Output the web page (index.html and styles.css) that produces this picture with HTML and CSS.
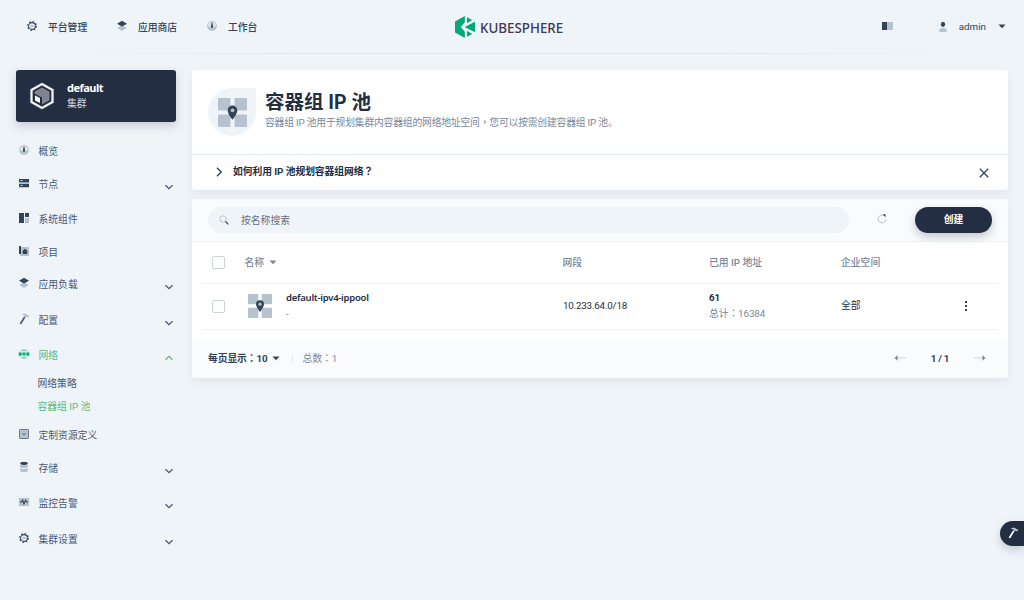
FILE: index.html
```html
<!DOCTYPE html>
<html lang="zh-CN">
<head>
    <meta charset="UTF-8">
    <meta name="viewport" content="width=device-width, initial-scale=1.0">
    <title>容器组 IP 池 - KubeSphere</title>
    <link rel="stylesheet" href="styles.css">
</head>
<body>
    <!-- shared icons -->
    <svg class="sprite" width="0" height="0">
        <symbol id="gear" viewBox="0 0 12 12">
            <circle cx="6" cy="6" r="4.4" fill="none" stroke="#324558" stroke-width="1.2" stroke-dasharray="1.5 1.956"/>
            <circle cx="6" cy="6" r="3.4" fill="none" stroke="#324558" stroke-width="1.1"/>
            <circle cx="6" cy="6" r="1.6" fill="#b6c2cd"/>
        </symbol>
        <symbol id="layers" viewBox="0 0 12 12">
            <path d="M6 5.2 10.8 8 6 11 1.2 8z" fill="#b6c2cd"/>
            <path d="M6 .8 11 3.8 6 6.6 1 3.8z" fill="#324558"/>
        </symbol>
        <symbol id="dashboard" viewBox="0 0 12 12">
            <circle cx="6" cy="6" r="4.9" fill="#b6c2cd"/>
            <path d="M2 6a4 4 0 0 1 8 0L8 7H4z" fill="#dfe6ec"/>
            <path d="M5.6 2.5h.8l.6 3.7a1.1 1.1 0 1 1-2 0z" fill="#324558"/>
        </symbol>
        <symbol id="pool" viewBox="0 0 24 24">
            <path d="M1 0h9.3v9L9 10.3H1a1 1 0 0 1-1-1V1a1 1 0 0 1 1-1zm12.7 0H23a1 1 0 0 1 1 1v8.3a1 1 0 0 1-1 1h-8L13.7 9zM1 13.7h8l1.3 1.3v9H1a1 1 0 0 1-1-1v-8.300a1 1 0 0 1 1-1zm14 0h8a1 1 0 0 1 1 1V23a1 1 0 0 1-1 1h-9.300v-9z" fill="#b6c2cd"/>
            <path d="M12 6.300a4 4 0 0 0-4 4c0 2.700 4 7.700 4 7.700s4-5 4-7.700a4 4 0 0 0-4-4z" fill="#324558"/>
            <circle cx="12" cy="10.200" r="1.600" fill="#b6c2cd"/>
        </symbol>
        <symbol id="hammer" viewBox="0 0 12 12">
            <path d="M3.500 1.200C6 .2 8 .6 9.300 2l1.800.6-.6 1.800-2-.7-1.200.5-1-1.800z" fill="#b6c2cd"/>
            <path d="M6 3.400l1.500.8-4.200 7.100-1.700-.8z" fill="currentColor"/>
        </symbol>
        <symbol id="chevron" viewBox="0 0 10 10">
            <path d="M1.500 3.200 5 6.700l3.500-3.500" fill="none" stroke="currentColor" stroke-width="1.300"/>
        </symbol>
        <symbol id="caret" viewBox="0 0 8 5">
            <path d="M.5.5h7L4 4.300z" fill="currentColor"/>
        </symbol>
    </svg>

    <header class="header">
        <nav class="topnav">
            <a class="topnav-item"><svg class="icon"><use href="#gear"/></svg>平台管理</a>
            <a class="topnav-item"><svg class="icon"><use href="#layers"/></svg>应用商店</a>
            <a class="topnav-item"><svg class="icon"><use href="#dashboard"/></svg>工作台</a>
        </nav>
        <div class="logo">
            <svg class="logo-mark" viewBox="0 0 20 22">
                <path d="M9.800 0v6.300L5.800 11l4 4.700V22L0 16.500v-11z" fill="#00aa72"/>
                <path d="M12 1.200 17.200 4 12 7.200zM20 5.800v10.400L9.600 11zM12 14.800l5.200 3.200L12 20.800z" fill="#00aa72"/>
            </svg>
            <span class="logo-text">KUBESPHERE</span>
        </div>
        <div class="header-right">
            <svg class="docs" viewBox="0 0 11 8"><path d="M0 0h5v8H0z" fill="#324558"/><path d="M5 0h6v8H5z" fill="#b6c2cd"/></svg>
            <svg class="user" viewBox="0 0 10 12"><ellipse cx="5" cy="3.300" rx="2.100" ry="2.600" fill="#324558"/><path d="M1 10.200c0-2 1.500-3.200 4-3.200s4 1.200 4 3.200c0 1.200-8 1.200-8 0z" fill="#b6c2cd"/></svg>
            <span class="user-name">admin</span>
            <svg class="caret"><use href="#caret"/></svg>
        </div>
    </header>

    <div class="layout">
        <aside class="sidebar">
            <div class="cluster">
                <svg class="cluster-icon" viewBox="0 0 26 28">
                    <path d="M13 2 23.500 8v12L13 26 2.500 20V8z" fill="none" stroke="#f2f3f5" stroke-width="2.300"/>
                    <path d="M13 5.500 20.500 9.800v8.400L13 22.500V15.500L5.500 11.500V9.800z" fill="#7e8592"/>
                    <path d="M6 13.500l5 2.600v5L6 18.500z" fill="#fff"/>
                </svg>
                <div>
                    <div class="cluster-name">default</div>
                    <div class="cluster-type">集群</div>
                </div>
            </div>
            <ul class="menu">
                <li><svg class="icon"><use href="#dashboard"/></svg>概览</li>
                <li><svg class="icon" viewBox="0 0 12 12"><path d="M1 5h10v2H1z" fill="#b6c2cd"/><path d="M1 2h10v3.200H1zM1 7h10v3.200H1z" fill="#324558"/><path d="M2.500 3.200h2v.8h-2zM2.500 8.200h2V9h-2z" fill="#fff"/></svg>节点<svg class="arrow"><use href="#chevron"/></svg></li>
                <li class="gap-l"><svg class="icon" viewBox="0 0 12 12"><path d="M1 1h5v10H1zM7 1h4v4H7z" fill="#324558"/><path d="M7 6h4v5H7z" fill="#b6c2cd"/></svg>系统组件</li>
                <li><svg class="icon" viewBox="0 0 12 12"><path d="M2 2h9v9H2z" fill="#b6c2cd"/><path d="M1 1h2v8H1zM4.500 6 7 3.700 9.500 6 9 9H5z" fill="#324558"/></svg>项目</li>
                <li class="gap-s"><svg class="icon"><use href="#layers"/></svg>应用负载<svg class="arrow"><use href="#chevron"/></svg></li>
                <li class="gap-xl"><svg class="icon"><use href="#hammer"/></svg>配置<svg class="arrow"><use href="#chevron"/></svg></li>
                <li class="gap-l active"><svg class="icon" viewBox="0 0 12 12"><circle cx="6" cy="6" r="4.500" fill="none" stroke="#8fd9bd"/><path d="M6 1v10M3.800 2.500h4.400M3.800 9.500h4.400" stroke="#8fd9bd" fill="none"/><path d="M.7 4.500h3v3h-3zM4.500 4.500h3v3h-3zM8.300 4.500h3v3h-3z" fill="#00aa72"/></svg>网络<svg class="arrow up"><use href="#chevron"/></svg></li>
                <li class="sub sub-first">网络策略</li>
                <li class="sub active">容器组 IP 池</li>
                <li class="after-sub"><svg class="icon" viewBox="0 0 12 12"><rect x="1.500" y="1.500" width="9" height="9" rx=".6" fill="#b6c2cd" stroke="#6c7b89"/><path d="M4.300 5.200 6 6.900l1.700-1.700" fill="none" stroke="#324558" stroke-width=".9"/></svg>定制资源定义</li>
                <li><svg class="icon" viewBox="0 0 12 12"><path d="M2.200 3.500h7.600v7c-2 .9-5.600.9-7.600 0z" fill="#b6c2cd"/><path d="M2.200 6.800c2 1 5.600 1 7.600 0" fill="none" stroke="#eff4f9"/><ellipse cx="6" cy="2.300" rx="3.800" ry="1.600" fill="#324558"/></svg>存储<svg class="arrow"><use href="#chevron"/></svg></li>
                <li class="gap-l"><svg class="icon" viewBox="0 0 12 12"><path d="M.8 2h10.400v8H.8z" fill="#b6c2cd"/><path d="M2 6h1.700l1-1.800L6 8l1.500-3.700L8.500 6H10" fill="none" stroke="#324558" stroke-width="1.100"/></svg>监控告警<svg class="arrow"><use href="#chevron"/></svg></li>
                <li class="gap-xl"><svg class="icon"><use href="#gear"/></svg>集群设置<svg class="arrow"><use href="#chevron"/></svg></li>
            </ul>
        </aside>

        <main class="main">
            <section class="panel banner">
                <div class="banner-top">
                    <div class="banner-icon"><svg><use href="#pool"/></svg></div>
                    <div>
                        <h1>容器组 IP 池</h1>
                        <p>容器组 IP 池用于规划集群内容器组的网络地址空间<span class="punct" lang="zh-Hant">，</span>您可以按需创建容器组 IP 池。</p>
                    </div>
                </div>
                <div class="tip">
                    <svg class="tip-arrow" viewBox="0 0 10 10"><path d="M3 .8 7.200 5 3 9.200" fill="none" stroke="#324558" stroke-width="1.400"/></svg>
                    <span>如何利用 IP 池规划容器组网络<span class="punct" lang="zh-Hant">？</span></span>
                    <svg class="tip-close" viewBox="0 0 10 10"><path d="M.8.8l8.400 8.400M9.200.8.800 9.200" stroke="#324558" stroke-width="1.300"/></svg>
                </div>
            </section>

            <section class="panel list">
                <div class="toolbar">
                    <div class="search">
                        <svg viewBox="0 0 10 10"><circle cx="4" cy="4" r="3.200" fill="none" stroke="#b6c2cd"/><path d="M6.500 6.500l2.800 2.800" stroke="#324558" stroke-width="1.200"/></svg>
                        <span>按名称搜索</span>
                    </div>
                    <svg class="refresh" viewBox="0 0 10 10"><path d="M7 1.700A3.900 3.900 0 1 0 8.900 5.300" fill="none" stroke="#b6c2cd"/><path d="M5.800.2h2.700v3z" fill="#324558"/></svg>
                    <button class="create">创建</button>
                </div>
                <div class="table">
                    <div class="row thead">
                        <div><i class="checkbox"></i></div>
                        <div class="sort">名称<svg class="caret"><use href="#caret"/></svg></div>
                        <div>网段</div>
                        <div>已用 IP 地址</div>
                        <div>企业空间</div>
                        <div></div>
                    </div>
                    <div class="row">
                        <div><i class="checkbox"></i></div>
                        <div class="pool">
                            <svg class="pool-icon"><use href="#pool"/></svg>
                            <div class="cell">
                                <strong class="pool-name">default-ipv4-ippool</strong>
                                <div>-</div>
                            </div>
                        </div>
                        <div class="cidr">10.233.64.0/18</div>
                        <div class="cell">
                            <strong>61</strong>
                            <div class="count">总计<span class="punct" lang="zh-Hant">：</span>16384</div>
                        </div>
                        <div class="workspace">全部</div>
                        <div class="more"><svg viewBox="0 0 4 12"><path d="M1 1h2v2H1zM1 5h2v2H1zM1 9h2v2H1z" fill="#324558"/></svg></div>
                    </div>
                </div>
                <div class="footer">
                    <span class="page-size">每页显示<span class="punct" lang="zh-Hant">：</span>10</span>
                    <svg class="caret"><use href="#caret"/></svg>
                    <span class="total">总数<span class="punct" lang="zh-Hant">：</span>1</span>
                    <div class="pager">
                        <svg viewBox="0 0 12 6"><path d="M3 3h9" stroke="#cbd3db" /><path d="M.5 3 3.500.2v5.600z" fill="#79879c"/></svg>
                        <span>1 / 1</span>
                        <svg viewBox="0 0 12 6"><path d="M0 3h9" stroke="#cbd3db"/><path d="M11.500 3 8.500.2v5.600z" fill="#79879c"/></svg>
                    </div>
                </div>
            </section>
        </main>
    </div>

    <div class="toolbox"><svg><use href="#hammer"/></svg></div>
</body>
</html>
```
FILE: styles.css
```css
* {
    box-sizing: border-box;
}
body {
    margin: 0;
    height: 600px;
    overflow: hidden;
    background: #eff4f9;
    color: #242e42;
    font-family: Roboto, "Noto Sans CJK SC", sans-serif;
    font-size: 9.8px;
    line-height: 16px;
}
svg {
    display: block;
    flex: none;
}
.sprite {
    position: absolute;
}
.icon {
    width: 12px;
    height: 12px;
}
.caret {
    width: 8px;
    height: 5px;
}
/* centered full-width punctuation */
.punct {
    font-family: "Noto Sans CJK TC", sans-serif;
    line-height: 1;
}

/* header */
.header {
    display: grid;
    grid-template-columns: 1fr 108px 1fr;
    align-items: center;
    height: 54px;
    padding: 0 18px 0 26px;
    border-bottom: 1px solid;
    border-image: linear-gradient(to right, #eff4f9 5%, #dfe4ea 35%, #dfe4ea 65%, #eff4f9 95%) 1;
}
.topnav {
    display: flex;
    gap: 28.8px;
    padding-top: 3px;
}
.topnav-item {
    display: flex;
    gap: 10px;
    font-weight: 500;
    color: #324558;
}
.logo {
    display: flex;
    align-items: center;
    gap: 5px;
    margin-left: -7px;
}
.logo-mark {
    width: 20px;
    height: 22px;
}
.logo-text {
    font-family: "Noto Sans", sans-serif;
    font-size: 15px;
    font-weight: 500;
    color: #403852;
    transform: scaleX(.89);
    transform-origin: left;
}
.header-right {
    display: flex;
    align-items: center;
    justify-content: flex-end;
    color: #324558;
}
.docs {
    width: 11px;
    height: 8px;
    margin: 0 45px 2px 0;
}
.user {
    width: 10px;
    height: 12px;
    margin-right: 11px;
}
.user-name {
    margin-right: 12px;
}

/* sidebar */
.layout {
    display: grid;
    grid-template-columns: 160px 816px;
    gap: 16px;
    padding: 16px;
}
.cluster {
    display: flex;
    align-items: center;
    gap: 12px;
    height: 52px;
    padding-left: 13px;
    border-radius: 3px;
    background: #242e42;
    color: #fff;
    box-shadow: 0 4px 10px rgba(36, 46, 66, .2);
}
.cluster-icon {
    width: 26px;
    height: 28px;
}
.cluster-name {
    font-family: "Noto Sans", sans-serif;
    font-size: 11px;
    font-weight: 700;
    letter-spacing: -.5px;
}
.cluster-type {
    color: #d8dce3;
}
.menu {
    list-style: none;
    margin: 22px 0 0;
    padding: 0 2.5px 0 1.5px;
}
.menu li {
    display: flex;
    height: 16px;
    margin-top: 17px;
    color: #4a5974;
}
.menu li:first-child {
    margin-top: 0;
}
.menu .icon {
    margin-right: 9px;
}
.menu .arrow {
    width: 10px;
    height: 10px;
    margin: 4.5px 0 0 auto;
}
.menu .up {
    transform: scaleY(-1);
}
.menu .gap-s {
    margin-top: 16px;
}
.menu .gap-l {
    margin-top: 19px;
}
.menu .gap-xl {
    margin-top: 20px;
}
.menu .active {
    color: #55bc8a;
}
.menu .sub {
    margin-top: 7px;
    padding-left: 20px;
}
.menu .sub-first {
    margin-top: 12px;
}
.menu .after-sub {
    margin-top: 13px;
}

/* content */
.panel {
    border-radius: 3px;
    background: #fff;
    box-shadow: 0 3px 8px rgba(36, 46, 66, .07);
    overflow: hidden;
}
.banner {
    height: 120px;
    margin-bottom: 9px;
}
.banner-top {
    display: flex;
    gap: 9px;
    height: 84px;
    padding: 18px 16px;
}
.banner-icon {
    display: flex;
    align-items: center;
    justify-content: center;
    width: 48px;
    height: 48px;
    border-radius: 24px 0 24px 24px;
    background: #eff4f9;
}
.banner-icon svg {
    width: 29px;
    height: 29px;
}
h1 {
    margin: 2px 0 0;
    font-size: 19.5px;
    line-height: 25px;
    font-weight: 700;
}
p {
    margin: 0;
    color: #79879c;
    letter-spacing: -.19px;
}
.tip {
    display: flex;
    align-items: center;
    height: 36px;
    padding: 0 19px 0 22px;
    border-top: 1px solid #e3e9ef;
    font-weight: 700;
    letter-spacing: -.07px;
}
.tip > span {
    padding-bottom: 2px;
}
.tip-arrow {
    width: 10px;
    height: 10px;
    margin: 0 9px 2px 0;
}
.tip-close {
    width: 10px;
    height: 10px;
    margin-left: auto;
}
.toolbar {
    display: flex;
    align-items: center;
    height: 43px;
    padding: 0 16px;
    border-bottom: 1px solid #eff2f5;
    background: #f9fbfd;
}
.search {
    display: flex;
    align-items: center;
    gap: 12px;
    width: 641px;
    height: 26px;
    padding-left: 11px;
    border-radius: 13px;
    background: #eff4f9;
    color: #5f708a;
}
.search span {
    padding-top: 2px;
}
.search svg {
    width: 10px;
    height: 10px;
}
.refresh {
    width: 10px;
    height: 10px;
    margin: 0 0 2px 28px;
}
.create {
    width: 77px;
    height: 26px;
    margin-left: auto;
    padding: 0;
    border: none;
    border-radius: 13px;
    background: #242e42;
    color: #fff;
    font: inherit;
    font-weight: 700;
    box-shadow: 0 4px 8px rgba(36, 46, 66, .25);
}
.table {
    height: 97px;
    padding: 0 10px;
}
.row {
    display: grid;
    grid-template-columns: 42.5px 318px 146.5px 132px 118.5px 1fr;
    align-items: center;
    height: 46px;
    border-bottom: 1px solid #eff2f5;
}
.thead {
    height: 42px;
    font-weight: 500;
    color: #79879c;
}
.checkbox {
    display: block;
    width: 13px;
    height: 13px;
    margin-left: 10px;
    border: 1px solid #ccd3db;
    border-radius: 2px;
    background: #fff;
}
.sort {
    display: flex;
    align-items: center;
    gap: 5px;
}
.pool {
    display: flex;
    align-items: center;
    gap: 14px;
    padding-left: 3.5px;
}
.pool-icon {
    width: 24px;
    height: 24px;
    margin-bottom: 1px;
}
.cell {
    padding-bottom: 2px;
    color: #79879c;
}
.cell strong {
    display: block;
    font-weight: 700;
    color: #242e42;
}
.cell .pool-name {
    font-family: "Noto Sans", sans-serif;
    font-size: 9.5px;
    font-weight: 600;
    letter-spacing: -.25px;
}
.cidr {
    padding: 0 0 2px .5px;
    letter-spacing: -.2px;
}
.workspace {
    padding-bottom: 2px;
}
.count,
.page-size,
.total {
    letter-spacing: -.1px;
}
.more svg {
    width: 4px;
    height: 12px;
    margin: 0 0 2px 4px;
}
.footer {
    display: flex;
    align-items: center;
    height: 39px;
    padding: 0 22px 0 16px;
    background: #f9fbfd;
    color: #324558;
}
.page-size {
    margin-right: 4px;
    font-weight: 700;
}
.total {
    margin-left: 12px;
    padding-left: 10px;
    border-left: 1px solid #e3e9ef;
    line-height: 9px;
    color: #79879c;
}
.pager {
    display: flex;
    align-items: center;
    gap: 25px;
    margin-left: auto;
    font-weight: 700;
    letter-spacing: -.3px;
}
.pager svg {
    width: 12px;
    height: 6px;
    margin-bottom: 2px;
}

/* floating toolbox button */
.toolbox {
    position: absolute;
    right: 0;
    top: 521px;
    width: 24px;
    height: 25px;
    padding: 6px 7px;
    border-radius: 13px 0 0 13px;
    background: #242e42;
    color: #fff;
    box-shadow: 0 4px 8px rgba(36, 46, 66, .2);
}
.toolbox svg {
    width: 12px;
    height: 12px;
}
```
